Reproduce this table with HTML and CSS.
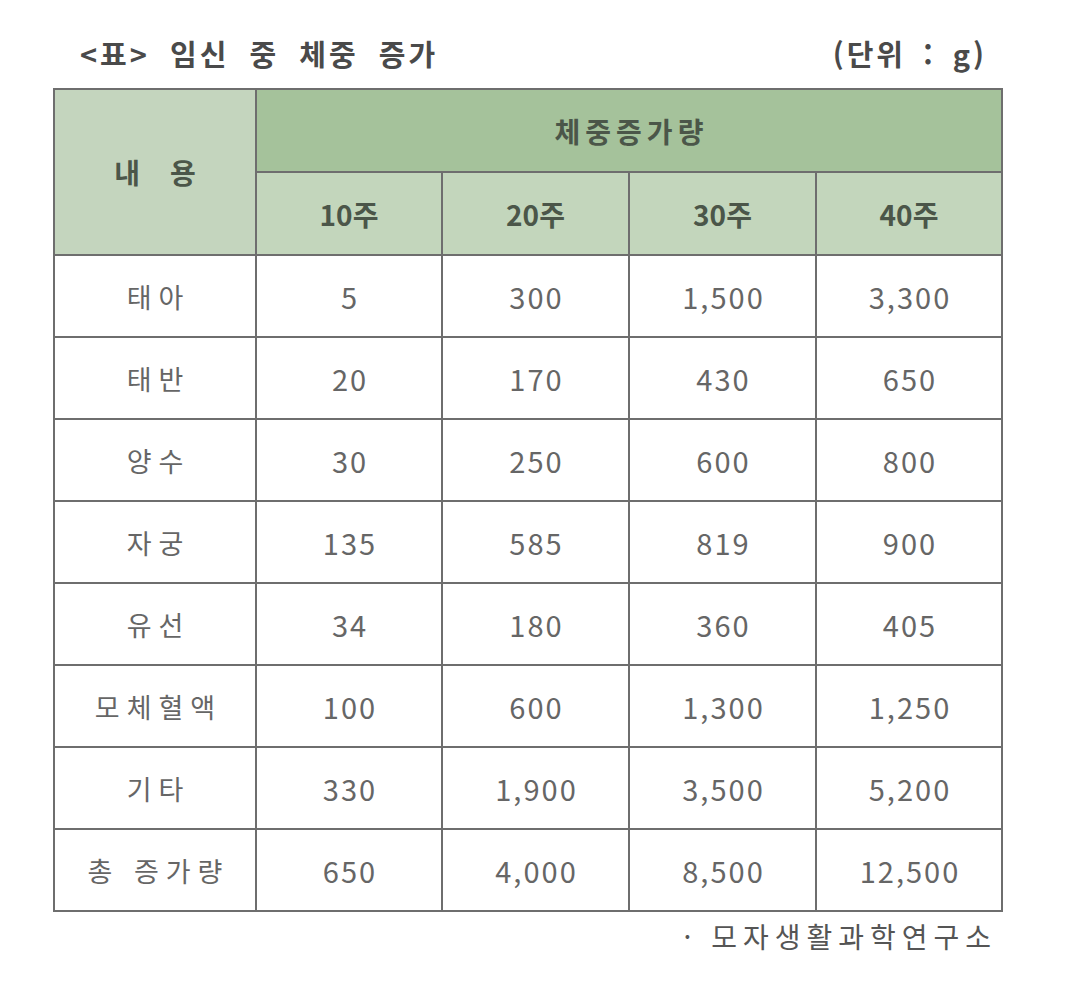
FILE: index.html
```html
<!DOCTYPE html>
<html lang="ko">
<head>
<meta charset="utf-8">
<link rel="stylesheet" href="styles.css">
</head>
<body>
<div class="page">
  <div class="caption">
    <span class="title">&lt;표&gt; 임신 중 체중 증가</span>
    <span class="unit">(단위 : g)</span>
  </div>
  <table class="data">
    <colgroup>
      <col class="c0"><col class="c1"><col class="c2"><col class="c3"><col class="c4">
    </colgroup>
    <thead>
      <tr class="h1">
        <th rowspan="2" class="label">내용</th>
        <th colspan="4" class="group">체중증가량</th>
      </tr>
      <tr class="h2">
        <th>10주</th><th>20주</th><th>30주</th><th>40주</th>
      </tr>
    </thead>
    <tbody>
      <tr><td class="name">태아</td><td>5</td><td>300</td><td>1,500</td><td>3,300</td></tr>
      <tr><td class="name">태반</td><td>20</td><td>170</td><td>430</td><td>650</td></tr>
      <tr><td class="name">양수</td><td>30</td><td>250</td><td>600</td><td>800</td></tr>
      <tr><td class="name">자궁</td><td>135</td><td>585</td><td>819</td><td>900</td></tr>
      <tr><td class="name">유선</td><td>34</td><td>180</td><td>360</td><td>405</td></tr>
      <tr><td class="name">모체혈액</td><td>100</td><td>600</td><td>1,300</td><td>1,250</td></tr>
      <tr><td class="name">기타</td><td>330</td><td>1,900</td><td>3,500</td><td>5,200</td></tr>
      <tr><td class="name">총 증가량</td><td>650</td><td>4,000</td><td>8,500</td><td>12,500</td></tr>
    </tbody>
  </table>
  <div class="source">· 모자생활과학연구소</div>
</div>
</body>
</html>
```
FILE: styles.css
```css
html, body {
  margin: 0;
  padding: 0;
  background: #ffffff;
}
body {
  width: 1080px;
  height: 1002px;
  overflow: hidden;
  font-family: "Noto Sans CJK KR", "Noto Sans", sans-serif;
}
.page {
  padding: 34px 0 0 53px;
  width: 948px;
}
.caption {
  display: flex;
  justify-content: space-between;
  align-items: center;
  height: 38px;
  margin-bottom: 16px;
  color: #4a4a4a;
  font-weight: 700;
  font-size: 29px;
}
.title {
  padding-left: 27px;
  letter-spacing: 3px;
  word-spacing: 9px;
}
.unit {
  padding-right: 14px;
  letter-spacing: 3px;
  word-spacing: 6px;
}
.data {
  border-collapse: collapse;
  width: 948px;
  table-layout: fixed;
  border: 2px solid #6e6e6e;
}
.c0 { width: 202px; }
.c1 { width: 186px; }
.c2 { width: 187px; }
.c3 { width: 187px; }
.c4 { width: 186px; }
.data th, .data td {
  border: 2px solid #6e6e6e;
  text-align: center;
  padding: 0;
}
.data th {
  color: #4b5649;
  font-weight: 700;
  font-size: 28px;
  letter-spacing: 0;
}
.h1 th { height: 81px; }
.h2 th { height: 81px; background: #c3d6bc; }
.data th.label { background: #c4d5be; letter-spacing: 30px; text-indent: 30px; }
.data th.group { background: #a5c29b; letter-spacing: 5px; text-indent: 5px; }
.data td {
  height: 80px;
  color: #666666;
  font-size: 29px;
  letter-spacing: 2px;
  text-indent: 2px;
  font-weight: 400;
}
.data td.name {
  font-size: 27px;
  letter-spacing: 7px;
  text-indent: 7px;
}
.source {
  text-align: right;
  padding-top: 4px;
  padding-right: 4px;
  color: #555555;
  font-size: 28px;
  letter-spacing: 6px;
}
```
